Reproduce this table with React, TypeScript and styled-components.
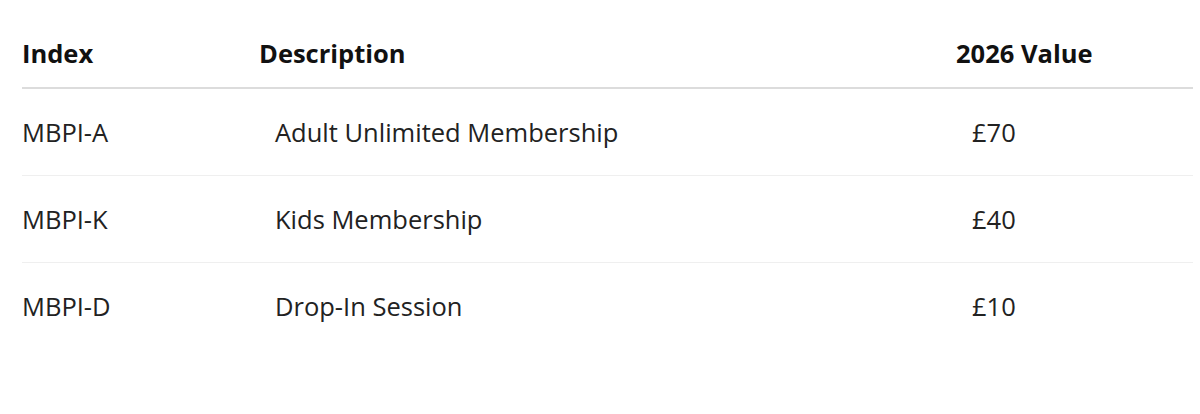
import React from 'react';
import styled, { createGlobalStyle } from 'styled-components';

const GlobalStyle = createGlobalStyle`
  body {
    margin: 0;
    background: #ffffff;
    font-family: "Open Sans", "Noto Sans", sans-serif;
    color: #1b1b1b;
  }
`;

interface Row {
  index: string;
  description: string;
  value: string;
}

const rows: Row[] = [
  { index: 'MBPI-A', description: 'Adult Unlimited Membership', value: '£70' },
  { index: 'MBPI-K', description: 'Kids Membership', value: '£40' },
  { index: 'MBPI-D', description: 'Drop-In Session', value: '£10' },
];

export default function App() {
  return (
    <>
      <GlobalStyle />
      <Page>
        <Table>
          <HeadRow>
            <HeadCell>Index</HeadCell>
            <HeadCell>Description</HeadCell>
            <HeadCell>2026 Value</HeadCell>
          </HeadRow>
          {rows.map((row, i) => (
            <BodyRow key={row.index} last={i === rows.length - 1}>
              <Cell>{row.index}</Cell>
              <Cell indent>{row.description}</Cell>
              <Cell indent>{row.value}</Cell>
            </BodyRow>
          ))}
        </Table>
      </Page>
    </>
  );
}

const Page = styled.div`
  padding: 18px 7px 0 22px;
`;

const Table = styled.div`
  display: flex;
  flex-direction: column;
  width: 1171px;
`;

const HeadRow = styled.div`
  display: grid;
  grid-template-columns: 237px 697px 1fr;
  align-items: center;
  height: 69px;
  border-bottom: 2px solid #dcdcdc;
`;

const HeadCell = styled.div`
  font-size: 25.5px;
  font-weight: 700;
  color: #111;
`;

const BodyRow = styled.div<{ last?: boolean }>`
  display: grid;
  grid-template-columns: 237px 697px 1fr;
  align-items: center;
  height: 86px;
  border-bottom: ${(p) => (p.last ? 'none' : '1px solid #efefef')};
`;

const Cell = styled.div<{ indent?: boolean }>`
  font-size: 25.5px;
  padding-left: ${(p) => (p.indent ? '16px' : '0')};
  color: #222;
`;
